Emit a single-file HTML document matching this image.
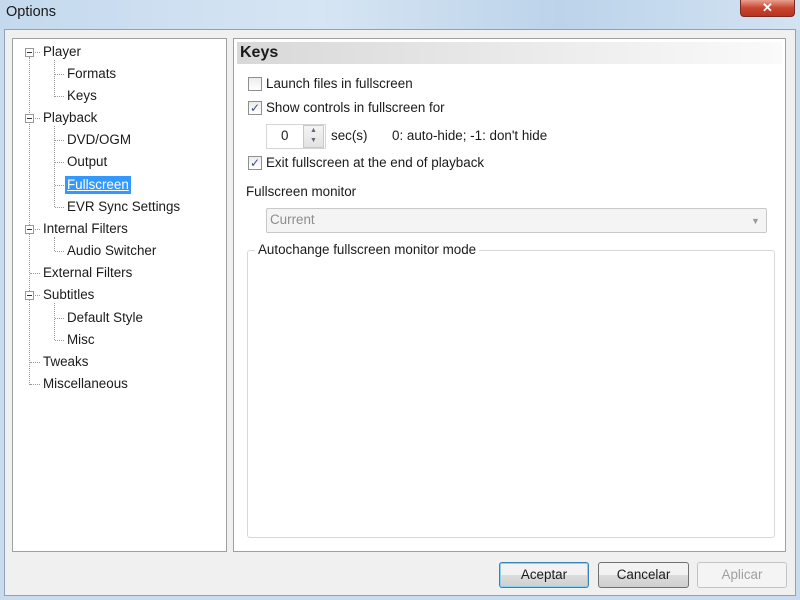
<!DOCTYPE html>
<html><head><style>
*{margin:0;padding:0;box-sizing:border-box}
body{width:800px;height:600px;overflow:hidden;font-family:"Liberation Sans",sans-serif;font-size:13.4px;color:#1a1a1a;background:#c9dcee;position:relative}
.t{position:absolute;white-space:nowrap;line-height:16px}
.title{position:absolute;left:0;top:0;width:800px;height:30px;background:linear-gradient(90deg,#c4d9ee,#d6e5f3 40%,#bcd3ea 70%,#d2e3f2)}
.client{position:absolute;left:4px;top:29px;width:792px;height:567px;background:#f0f0f0;border:1px solid #8ea3bb}
.panel{position:absolute;background:#fff;border:1px solid #a0a0a0}
.cb{position:absolute;width:14px;height:14px;border:1px solid #8e8f8f;background:linear-gradient(#ececec,#fff);font-size:12px;line-height:12px;text-align:center;color:#3a4f80}
.btn{position:absolute;top:562px;height:26px;border:1px solid #707070;border-radius:3px;background:linear-gradient(#f2f2f2 50%,#dcdcdc 50%,#cfcfcf);text-align:center;line-height:24px;font-size:13.4px}
.d{position:absolute;border-left:1px dotted #999}
.h{position:absolute;border-top:1px dotted #999}
.box{position:absolute;width:9px;height:9px;border:1px solid #999;background:#fff}
.box::after{content:"";position:absolute;left:1px;top:3px;width:5px;height:1px;background:#333}
</style></head><body>
<div class="title"></div>
<div class="t" style="left:6px;top:4px;font-size:14.5px">Options</div>
<div style="position:absolute;left:740px;top:0;width:55px;height:17px;background:linear-gradient(#e8a08f,#c8452f 50%,#b83320);border:1px solid #7a2a20;border-top:none;border-radius:0 0 4px 4px;color:#fff;text-align:center;font-weight:bold;font-size:13px;line-height:15px">✕</div>
<div class="client"></div>
<div class="panel" style="left:12px;top:38px;width:215px;height:514px"></div>
<div class="panel" style="left:233px;top:38px;width:553px;height:514px"></div>
<div class="d" style="left:29px;top:57px;height:328px"></div>
<div class="d" style="left:54px;top:60px;height:37px"></div>
<div class="d" style="left:54px;top:126px;height:81px"></div>
<div class="d" style="left:54px;top:237px;height:14px"></div>
<div class="d" style="left:54px;top:303px;height:37px"></div>
<div class="h" style="left:30px;top:52px;width:10px"></div>
<div class="h" style="left:30px;top:118px;width:10px"></div>
<div class="h" style="left:30px;top:229px;width:10px"></div>
<div class="h" style="left:30px;top:273px;width:10px"></div>
<div class="h" style="left:30px;top:295px;width:10px"></div>
<div class="h" style="left:30px;top:362px;width:10px"></div>
<div class="h" style="left:30px;top:384px;width:10px"></div>
<div class="h" style="left:55px;top:74px;width:9px"></div>
<div class="h" style="left:55px;top:96px;width:9px"></div>
<div class="h" style="left:55px;top:140px;width:9px"></div>
<div class="h" style="left:55px;top:162px;width:9px"></div>
<div class="h" style="left:55px;top:185px;width:9px"></div>
<div class="h" style="left:55px;top:207px;width:9px"></div>
<div class="h" style="left:55px;top:251px;width:9px"></div>
<div class="h" style="left:55px;top:318px;width:9px"></div>
<div class="h" style="left:55px;top:340px;width:9px"></div>
<div class="box" style="left:25px;top:48px"></div>
<div class="box" style="left:25px;top:114px"></div>
<div class="box" style="left:25px;top:225px"></div>
<div class="box" style="left:25px;top:291px"></div>
<div class="t" style="left:43px;top:44px">Player</div>
<div class="t" style="left:67px;top:66px">Formats</div>
<div class="t" style="left:67px;top:88px">Keys</div>
<div class="t" style="left:43px;top:110px">Playback</div>
<div class="t" style="left:67px;top:132px">DVD/OGM</div>
<div class="t" style="left:67px;top:154px">Output</div>
<div class="t" style="left:65px;top:176px;background:#3399ff;color:#fff;text-decoration:underline;padding:1px 2px">Fullscreen</div>
<div class="t" style="left:67px;top:199px">EVR Sync Settings</div>
<div class="t" style="left:43px;top:221px">Internal Filters</div>
<div class="t" style="left:67px;top:243px">Audio Switcher</div>
<div class="t" style="left:43px;top:265px">External Filters</div>
<div class="t" style="left:43px;top:287px">Subtitles</div>
<div class="t" style="left:67px;top:310px">Default Style</div>
<div class="t" style="left:67px;top:332px">Misc</div>
<div class="t" style="left:43px;top:354px">Tweaks</div>
<div class="t" style="left:43px;top:376px">Miscellaneous</div>
<div style="position:absolute;left:237px;top:42px;width:545px;height:22px;background:linear-gradient(90deg,#d8d8d8,#f0f0f0 70%,#fafafa)"></div>
<div class="t" style="left:240px;top:45px;font-weight:bold;font-size:16px">Keys</div>
<div class="cb" style="left:248px;top:77px"></div>
<div class="t" style="left:266px;top:76px">Launch files in fullscreen</div>
<div class="cb" style="left:248px;top:101px">✓</div>
<div class="t" style="left:266px;top:100px">Show controls in fullscreen for</div>
<div style="position:absolute;left:266px;top:124px;width:60px;height:25px;background:#fff;border:1px solid #d5d5d5"></div>
<div class="t" style="left:281px;top:128px">0</div>
<div style="position:absolute;left:303px;top:125px;width:21px;height:23px;border:1px solid #c8c8c8;background:linear-gradient(#f4f4f4,#e2e2e2);font-size:7px;color:#667;text-align:center;line-height:10px">▲<br>▼</div>
<div class="t" style="left:331px;top:128px">sec(s)</div>
<div class="t" style="left:392px;top:128px">0: auto-hide; -1: don't hide</div>
<div class="cb" style="left:248px;top:156px">✓</div>
<div class="t" style="left:266px;top:155px">Exit fullscreen at the end of playback</div>
<div class="t" style="left:246px;top:184px">Fullscreen monitor</div>
<div style="position:absolute;left:266px;top:208px;width:501px;height:25px;border:1px solid #c8c8c8;border-radius:2px;background:#f4f4f4"></div>
<div class="t" style="left:270px;top:212px;color:#8d8d8d">Current</div>
<div class="t" style="left:751px;top:213px;color:#999;font-size:9px">▼</div>
<div style="position:absolute;left:247px;top:250px;width:528px;height:288px;border:1px solid #d8d8d8;border-radius:3px"></div>
<div class="t" style="left:255px;top:242px;background:#fff;padding:0 3px">Autochange fullscreen monitor mode</div>
<div class="btn" style="left:499px;width:90px;border-color:#3c7fb1;box-shadow:inset 0 0 0 1px #8ed2f0">Aceptar</div>
<div class="btn" style="left:598px;width:91px">Cancelar</div>
<div class="btn" style="left:697px;width:90px;border-color:#c4c4c4;background:#f4f4f4;color:#a0a0a0">Aplicar</div>
</body></html>
